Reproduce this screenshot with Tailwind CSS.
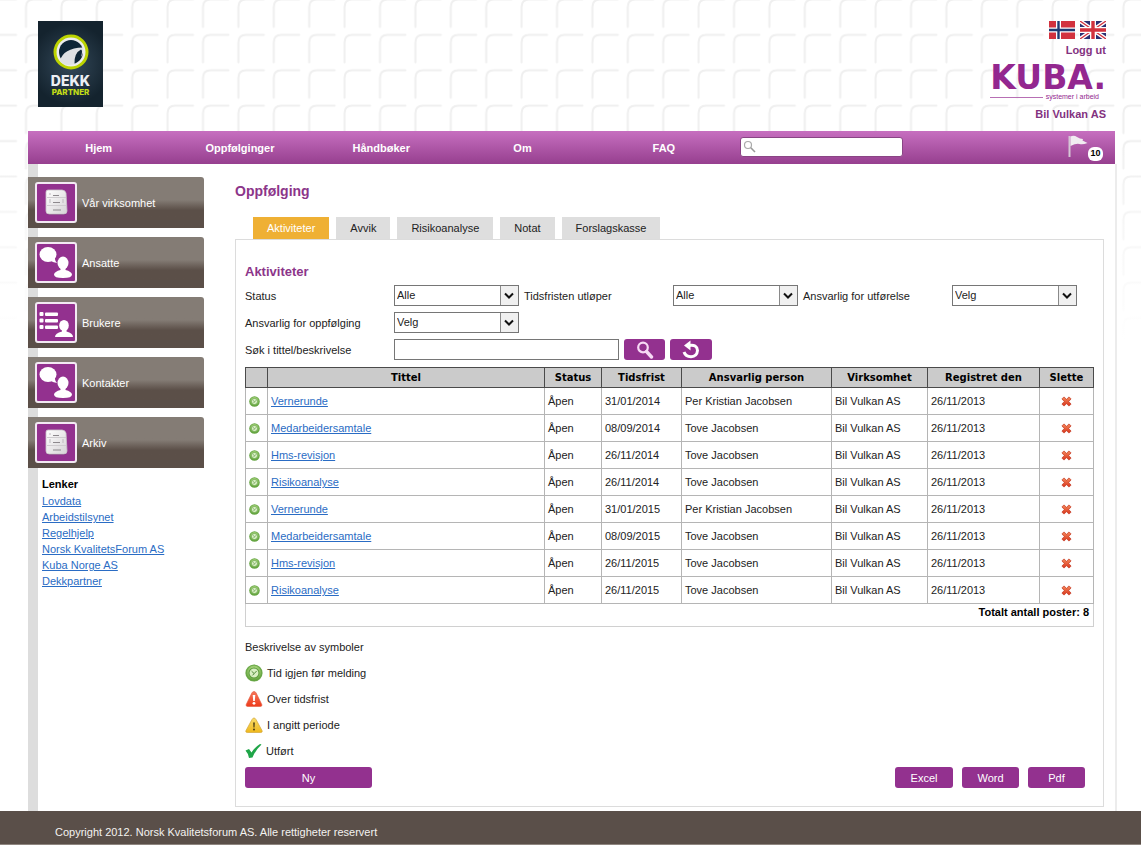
<!DOCTYPE html>
<html lang="no">
<head>
<meta charset="utf-8">
<title>Kuba – Oppfølging</title>
<script src="https://cdn.jsdelivr.net/npm/@tailwindcss/browser@4"></script>
</head>
<body class="relative min-h-screen bg-white font-['Liberation_Sans',Arial,sans-serif] text-[11px] leading-4 text-[#222]">

<!-- Shared icon shapes -->
<svg class="absolute h-0 w-0" aria-hidden="true">
  <defs>
    <radialGradient id="gGreen" cx=".5" cy=".4" r=".6"><stop offset="0" stop-color="#cfeaa8"/><stop offset=".55" stop-color="#9fce74"/><stop offset="1" stop-color="#5a9e36"/></radialGradient>
    <linearGradient id="gRed" x1="0" y1="0" x2="0" y2="1"><stop offset="0" stop-color="#f4775a"/><stop offset="1" stop-color="#ee3b1c"/></linearGradient>
    <linearGradient id="gYellow" x1="0" y1="0" x2="0" y2="1"><stop offset="0" stop-color="#f8dc6a"/><stop offset="1" stop-color="#efb81c"/></linearGradient>
    <linearGradient id="gCross" x1="0" y1="0" x2="0" y2="1"><stop offset="0" stop-color="#f58a5c"/><stop offset="1" stop-color="#d8341c"/></linearGradient>
    <linearGradient id="gCab" x1="0" y1="0" x2="1" y2="1"><stop offset="0" stop-color="#ffffff"/><stop offset="1" stop-color="#d6d3d6"/></linearGradient>
    <symbol id="clock" viewBox="0 0 18 18">
      <circle cx="9" cy="9" r="8.6" fill="#6aa848"/><circle cx="9" cy="9" r="7.4" fill="url(#gGreen)"/>
      <circle cx="9" cy="9" r="5" fill="#d9efc4" stroke="#5d9c3e" stroke-width="1.1"/>
      <path d="M6.6 7.2 9.2 9.6 11.6 7M9.2 9.6 7.4 11.4" fill="none" stroke="#4f8a3a" stroke-width="1"/>
    </symbol>
    <symbol id="cross" viewBox="0 0 12 12">
      <path d="M3.2 1 6 3.6 8.8 1 11 3.2 8.4 6 11 8.8 8.8 11 6 8.4 3.2 11 1 8.8 3.6 6 1 3.2Z" fill="url(#gCross)" stroke="#c23a22" stroke-width=".8" stroke-linejoin="round"/>
    </symbol>
    <symbol id="cabinet" viewBox="0 0 38 37">
      <path d="M10 28h19l-1 3H11Z" fill="#6d1d6b" opacity=".6"/>
      <path d="M11 6h14q3 0 4 3l1 18q0 3-3 3H12q-3 0-3-3V8q0-2 2-2Z" fill="url(#gCab)" stroke="#c9c4c9" stroke-width=".8"/>
      <path d="M10 13.5h19M10 21.500h19" stroke="#cfcccf" stroke-width="1"/>
      <path d="M16 11.500h6M16 18.500h7M16 26h8" stroke="#8d898d" stroke-width="1.200"/>
      <path d="M13 15v4M26 15v4M13 9v2" stroke="#bdb9bd" stroke-width="1"/>
    </symbol>
    <symbol id="talk" viewBox="0 0 38 37">
      <ellipse cx="11" cy="10.500" rx="8.500" ry="7.500" fill="#fff"/><path d="M13 16q3 3 7 3-2-2-2.500-6Z" fill="#fff"/>
      <ellipse cx="26" cy="19" rx="5.500" ry="6.500" fill="#fff"/>
      <path d="M23.500 22h5v4q6 1.500 6.500 4.500 0 3.500-9 3.500t-9-3.500q.5-3 6.500-4.500Z" fill="#fff"/>
    </symbol>
    <symbol id="list" viewBox="0 0 38 37">
      <g fill="#fff"><rect x="2.500" y="8" width="4" height="4" rx="1"/><rect x="8" y="8.500" width="13" height="3.500" rx="1"/>
      <rect x="2.500" y="14.500" width="4" height="4" rx="1"/><rect x="8" y="15" width="13" height="3.500" rx="1"/>
      <rect x="2.500" y="21" width="4" height="4" rx="1"/><rect x="8" y="21.500" width="13" height="3.500" rx="1"/></g>
      <ellipse cx="27" cy="21.500" rx="4.800" ry="5.500" fill="#fff"/>
      <path d="M25 24h4.500v3.500q6.500 1.500 6.500 5.500H18q0-4 7-5.500Z" fill="#fff"/>
    </symbol>
    <symbol id="chev" viewBox="0 0 18 19">
      <rect width="18" height="19" fill="#f0f0f0"/><path d="M.5 0v19" stroke="#8a8a8a"/><path d="M5 7.500 9 11.500 13 7.500" fill="none" stroke="#111" stroke-width="2"/>
    </symbol>
  </defs>
</svg>

<!-- Tiled backdrop, fading out downwards -->
<div class="absolute inset-x-0 top-0 h-[340px] overflow-hidden" aria-hidden="true">
  <svg class="h-full w-full">
    <defs>
      <pattern id="tiles" width="35.4" height="35.4" patternUnits="userSpaceOnUse" x="24.500" y="-2">
        <path d="M1.500 29V9Q1.500 1.500 9 1.500H27" fill="none" stroke="#efefef" stroke-width="2" stroke-linecap="round"/>
      </pattern>
      <linearGradient id="fade" x1="0" y1="0" x2="0" y2="1"><stop offset=".4" stop-color="#fff" stop-opacity="0"/><stop offset="1" stop-color="#fff"/></linearGradient>
    </defs>
    <rect width="100%" height="100%" fill="url(#tiles)"/><rect width="100%" height="100%" fill="url(#fade)"/>
  </svg>
</div>

<div class="relative">
  <header class="ml-7 mr-[26px]">
    <div class="flex h-[131px] items-start justify-between pl-[10px] pr-[9px] pt-[21px]">
      <a href="#" class="flex h-[86px] w-[65px] flex-col items-center bg-[radial-gradient(circle_at_center,#34495a,#14232e_75%)] pt-[12px] font-['Inter',sans-serif]">
        <svg class="h-[38px] w-[38px] shrink-0" viewBox="0 0 38 38" aria-hidden="true">
          <circle cx="19" cy="19" r="16" fill="#ececec" stroke="#bcd300" stroke-width="3"/>
          <circle cx="19" cy="19" r="12" fill="#0f2636"/>
          <path d="M8 28Q11 15 31 14.500 32 20 29 24 31 17 29 16.500 22 20 22.500 31 13 34 8 28Z" fill="#dfe1e3"/>
        </svg>
        <span class="pt-[3px] text-[14px] font-extrabold leading-[14px] text-[#eceff4]">DEKK</span>
        <span class="text-[8px] font-extrabold leading-[8px] text-[#c3dc16]">PARTNER</span>
      </a>
      <div class="flex flex-col items-end font-bold text-[#83327f]">
        <div class="flex gap-[5px]">
          <a href="#" aria-label="Norsk"><svg class="h-[18px] w-[26px]" viewBox="0 0 26 18"><path fill="#d2323e" d="M0 0h26v18H0z"/><path d="M9.500 0v18M0 9h26" stroke="#fff" stroke-width="5"/><path d="M9.500 0v18M0 9h26" stroke="#1f3b73" stroke-width="2.400"/></svg></a>
          <a href="#" aria-label="English"><svg class="h-[18px] w-[26px]" viewBox="0 0 26 18"><path fill="#2b2f72" d="M0 0h26v18H0z"/><path d="M0 0 26 18M26 0 0 18" stroke="#fff" stroke-width="4"/><path d="M0 0 26 18M26 0 0 18" stroke="#d2323e" stroke-width="1.300"/><path d="M13 0v18M0 9h26" stroke="#fff" stroke-width="6"/><path d="M13 0v18M0 9h26" stroke="#d2323e" stroke-width="3.400"/></svg></a>
        </div>
        <a href="#" class="mt-[3px]">Logg ut</a>
        <div class="mt-[6px] flex flex-col items-end text-[#93278f]">
          <span class="font-['DejaVu_Sans',sans-serif] text-[33px] font-bold leading-[28px]">KUBA.</span>
          <div class="flex w-full items-center gap-[3px] pr-[7px]"><span class="h-px grow bg-[#b76fb4]"></span><span class="text-[7px] font-normal leading-[10px]">systemer i arbeid</span></div>
        </div>
        <span class="mt-[4px]">Bil Vulkan AS</span>
      </div>
    </div>
    <nav class="flex h-[33px] items-center bg-linear-to-b from-[#c76fc0] to-[#963f8f] font-bold text-white">
      <a href="#" class="w-[13%] text-center">Hjem</a>
      <a href="#" class="w-[13%] text-center">Oppfølginger</a>
      <a href="#" class="w-[13%] text-center">Håndbøker</a>
      <a href="#" class="w-[13%] text-center">Om</a>
      <a href="#" class="w-[13%] text-center">FAQ</a>
      <label class="mb-px ml-[6px] flex h-[20px] w-[163px] items-center rounded-[3px] border border-[#8a4585] bg-white pl-[2px]">
        <svg class="h-[14px] w-[14px]" viewBox="0 0 14 14" fill="none" aria-hidden="true"><circle cx="5" cy="5" r="3.500" stroke="#aaa" stroke-width="1.200"/><path d="M7.800 7.800 12 12" stroke="#999" stroke-width="1.600"/></svg>
        <input type="search" aria-label="Søk" class="min-w-0 grow font-normal text-[#222] outline-none">
      </label>
      <a href="#" class="ml-auto mr-[12px] flex items-end text-black">
        <svg class="mb-[4px] h-[22px] w-[20px]" viewBox="0 0 20 22" aria-hidden="true"><path d="M1.500 1v21" stroke="#d5c6d5" stroke-width="2"/><path d="M2.500 1.500Q6 0 9 2t6 2l-.5 1.500 5 2.500q-5 2-8 1T2.500 11Z" fill="#f1ecf1"/></svg>
        <span class="flex h-[14px] w-[15px] items-center justify-center rounded-[6px] bg-white text-[9px] leading-none">10</span>
      </a>
    </nav>
  </header>

  <div class="ml-7 mr-[24px] flex border-r-2 border-[#ececec] bg-white">
    <aside class="w-[207px] shrink-0 bg-[linear-gradient(to_right,#dddddd_10px,transparent_10px)] pt-[13px]">
      <ul class="flex w-[176px] flex-col gap-[9px] text-white">
        <li><a href="#" class="flex h-[51px] items-center gap-[5px] rounded-tr-[3px] bg-linear-to-b from-[#847c75] from-45% to-[#5b4f48] to-65% pl-[7px]"><svg class="h-[41px] w-[42px] rounded-[3px] border-2 border-[#f3e9f3] bg-[#93318f]"><use href="#cabinet"/></svg>Vår virksomhet</a></li>
        <li><a href="#" class="flex h-[51px] items-center gap-[5px] rounded-tr-[3px] bg-linear-to-b from-[#847c75] from-45% to-[#5b4f48] to-65% pl-[7px]"><svg class="h-[41px] w-[42px] rounded-[3px] border-2 border-[#f3e9f3] bg-[#93318f]"><use href="#talk"/></svg>Ansatte</a></li>
        <li><a href="#" class="flex h-[51px] items-center gap-[5px] rounded-tr-[3px] bg-linear-to-b from-[#847c75] from-45% to-[#5b4f48] to-65% pl-[7px]"><svg class="h-[41px] w-[42px] rounded-[3px] border-2 border-[#f3e9f3] bg-[#93318f]"><use href="#list"/></svg>Brukere</a></li>
        <li><a href="#" class="flex h-[51px] items-center gap-[5px] rounded-tr-[3px] bg-linear-to-b from-[#847c75] from-45% to-[#5b4f48] to-65% pl-[7px]"><svg class="h-[41px] w-[42px] rounded-[3px] border-2 border-[#f3e9f3] bg-[#93318f]"><use href="#talk"/></svg>Kontakter</a></li>
        <li><a href="#" class="flex h-[51px] items-center gap-[5px] rounded-tr-[3px] bg-linear-to-b from-[#847c75] from-45% to-[#5b4f48] to-65% pl-[7px]"><svg class="h-[41px] w-[42px] rounded-[3px] border-2 border-[#f3e9f3] bg-[#93318f]"><use href="#cabinet"/></svg>Arkiv</a></li>
      </ul>
      <div class="pl-[14px] pt-[8px] text-[#2a6cc4]">
        <h2 class="mb-px font-bold text-black">Lenker</h2>
        <ul class="underline">
          <li><a href="#">Lovdata</a></li>
          <li><a href="#">Arbeidstilsynet</a></li>
          <li><a href="#">Regelhjelp</a></li>
          <li><a href="#">Norsk KvalitetsForum AS</a></li>
          <li><a href="#">Kuba Norge AS</a></li>
          <li><a href="#">Dekkpartner</a></li>
        </ul>
      </div>
    </aside>

    <main class="min-w-0 grow pb-[4px] pr-[11px] pt-[17px]">
      <h1 class="text-[14px] font-bold leading-5 text-[#8c358a]">Oppfølging</h1>
      <div class="mt-[16px] flex gap-[7px] pl-[18px]">
        <button class="h-[22px] bg-[#efb034] px-[14px] text-white">Aktiviteter</button>
        <button class="h-[22px] bg-[#dedede] px-[14px]">Avvik</button>
        <button class="h-[22px] bg-[#dedede] px-[14px]">Risikoanalyse</button>
        <button class="h-[22px] bg-[#dedede] px-[14px]">Notat</button>
        <button class="h-[22px] bg-[#dedede] px-[14px]">Forslagskasse</button>
      </div>
      <section class="border border-[#dcdcdc] px-[9px] pb-[18px] pt-[24px]">
        <h2 class="text-[13px] font-bold leading-4 text-[#8c358a]">Aktiviteter</h2>
        <form class="mt-[5px] grid grid-cols-[149px_125px_154px_125px_154px_125px] items-center gap-y-[6px]">
          <label for="status">Status</label>
          <div class="relative h-[21px] border border-[#767676]"><select id="status" class="h-full w-full appearance-none pl-[2px] leading-none outline-none"><option>Alle</option></select><svg class="pointer-events-none absolute right-0 top-0 h-[19px] w-[18px]"><use href="#chev"/></svg></div>
          <label for="frist" class="pl-[5px]">Tidsfristen utløper</label>
          <div class="relative h-[21px] border border-[#767676]"><select id="frist" class="h-full w-full appearance-none pl-[2px] leading-none outline-none"><option>Alle</option></select><svg class="pointer-events-none absolute right-0 top-0 h-[19px] w-[18px]"><use href="#chev"/></svg></div>
          <label for="utf" class="pl-[5px]">Ansvarlig for utførelse</label>
          <div class="relative h-[21px] border border-[#767676]"><select id="utf" class="h-full w-full appearance-none pl-[2px] leading-none outline-none"><option>Velg</option></select><svg class="pointer-events-none absolute right-0 top-0 h-[19px] w-[18px]"><use href="#chev"/></svg></div>
          <label for="opp">Ansvarlig for oppfølging</label>
          <div class="relative h-[21px] border border-[#767676]"><select id="opp" class="h-full w-full appearance-none pl-[2px] leading-none outline-none"><option>Velg</option></select><svg class="pointer-events-none absolute right-0 top-0 h-[19px] w-[18px]"><use href="#chev"/></svg></div>
          <label for="sok" class="col-start-1">Søk i tittel/beskrivelse</label>
          <div class="col-span-5 flex gap-[5px]">
            <input id="sok" type="text" class="h-[21px] w-[225px] border border-[#767676] px-1 outline-none">
            <button type="button" aria-label="Søk" class="flex h-[21px] w-[41px] items-center justify-center rounded-[3px] bg-[#93318f]"><svg class="h-[18px] w-[18px]" viewBox="0 0 18 18" fill="none" stroke="#f7d9f5"><circle cx="7" cy="6.500" r="4.800" stroke-width="2.200"/><path d="m10.500 10.500 5 5.500" stroke-width="3.400" stroke-linecap="round"/></svg></button>
            <button type="button" aria-label="Nullstill" class="flex h-[21px] w-[42px] items-center justify-center rounded-[3px] bg-[#93318f]"><svg class="h-[20px] w-[20px]" viewBox="0 0 20 20"><path d="M8 5.500Q16 4 16.500 10.500 16 16.500 10 16.800 4.500 16.500 3 12" fill="none" stroke="#fff" stroke-width="3"/><path d="M3 5.500 9.500 .5V10.500Z" fill="#fff"/></svg></button>
          </div>
        </form>

        <table class="mt-[7px] w-full table-fixed border-collapse [&_td]:border [&_td]:border-[#b5b5b5] [&_td]:px-[3px] [&_th]:border [&_th]:border-[#4a4a4a] [&_th]:bg-[#cbcbcb] [&_th]:p-0 [&_td:last-child>button]:mx-auto">
          <colgroup><col class="w-[22px]"><col><col class="w-[57px]"><col class="w-[80px]"><col class="w-[150px]"><col class="w-[96px]"><col class="w-[112px]"><col class="w-[54px]"></colgroup>
          <thead>
            <tr class="h-[20px] font-['DejaVu_Sans',sans-serif] text-[10px] font-bold text-black"><th aria-label="Symbol"></th><th>Tittel</th><th>Status</th><th>Tidsfrist</th><th>Ansvarlig person</th><th>Virksomhet</th><th>Registret den</th><th>Slette</th></tr>
          </thead>
          <tbody>
            <tr class="h-[27px]"><td><svg class="block h-[11px] w-[11px]"><use href="#clock"/></svg></td><td><a href="#" class="text-[#2a6cc4] underline">Vernerunde</a></td><td>Åpen</td><td>31/01/2014</td><td>Per Kristian Jacobsen</td><td>Bil Vulkan AS</td><td>26/11/2013</td><td><button aria-label="Slett" class="block"><svg class="block h-[11px] w-[11px]"><use href="#cross"/></svg></button></td></tr>
            <tr class="h-[27px]"><td><svg class="block h-[11px] w-[11px]"><use href="#clock"/></svg></td><td><a href="#" class="text-[#2a6cc4] underline">Medarbeidersamtale</a></td><td>Åpen</td><td>08/09/2014</td><td>Tove Jacobsen</td><td>Bil Vulkan AS</td><td>26/11/2013</td><td><button aria-label="Slett" class="block"><svg class="block h-[11px] w-[11px]"><use href="#cross"/></svg></button></td></tr>
            <tr class="h-[27px]"><td><svg class="block h-[11px] w-[11px]"><use href="#clock"/></svg></td><td><a href="#" class="text-[#2a6cc4] underline">Hms-revisjon</a></td><td>Åpen</td><td>26/11/2014</td><td>Tove Jacobsen</td><td>Bil Vulkan AS</td><td>26/11/2013</td><td><button aria-label="Slett" class="block"><svg class="block h-[11px] w-[11px]"><use href="#cross"/></svg></button></td></tr>
            <tr class="h-[27px]"><td><svg class="block h-[11px] w-[11px]"><use href="#clock"/></svg></td><td><a href="#" class="text-[#2a6cc4] underline">Risikoanalyse</a></td><td>Åpen</td><td>26/11/2014</td><td>Tove Jacobsen</td><td>Bil Vulkan AS</td><td>26/11/2013</td><td><button aria-label="Slett" class="block"><svg class="block h-[11px] w-[11px]"><use href="#cross"/></svg></button></td></tr>
            <tr class="h-[27px]"><td><svg class="block h-[11px] w-[11px]"><use href="#clock"/></svg></td><td><a href="#" class="text-[#2a6cc4] underline">Vernerunde</a></td><td>Åpen</td><td>31/01/2015</td><td>Per Kristian Jacobsen</td><td>Bil Vulkan AS</td><td>26/11/2013</td><td><button aria-label="Slett" class="block"><svg class="block h-[11px] w-[11px]"><use href="#cross"/></svg></button></td></tr>
            <tr class="h-[27px]"><td><svg class="block h-[11px] w-[11px]"><use href="#clock"/></svg></td><td><a href="#" class="text-[#2a6cc4] underline">Medarbeidersamtale</a></td><td>Åpen</td><td>08/09/2015</td><td>Tove Jacobsen</td><td>Bil Vulkan AS</td><td>26/11/2013</td><td><button aria-label="Slett" class="block"><svg class="block h-[11px] w-[11px]"><use href="#cross"/></svg></button></td></tr>
            <tr class="h-[27px]"><td><svg class="block h-[11px] w-[11px]"><use href="#clock"/></svg></td><td><a href="#" class="text-[#2a6cc4] underline">Hms-revisjon</a></td><td>Åpen</td><td>26/11/2015</td><td>Tove Jacobsen</td><td>Bil Vulkan AS</td><td>26/11/2013</td><td><button aria-label="Slett" class="block"><svg class="block h-[11px] w-[11px]"><use href="#cross"/></svg></button></td></tr>
            <tr class="h-[27px]"><td><svg class="block h-[11px] w-[11px]"><use href="#clock"/></svg></td><td><a href="#" class="text-[#2a6cc4] underline">Risikoanalyse</a></td><td>Åpen</td><td>26/11/2015</td><td>Tove Jacobsen</td><td>Bil Vulkan AS</td><td>26/11/2013</td><td><button aria-label="Slett" class="block"><svg class="block h-[11px] w-[11px]"><use href="#cross"/></svg></button></td></tr>
          </tbody>
        </table>
        <p class="h-[23px] border border-t-0 border-[#d0d0d0] pr-1 text-right font-bold text-black">Totalt antall poster: 8</p>

        <p class="mt-[12px]">Beskrivelse av symboler</p>
        <ul class="mt-[5px]">
          <li class="flex h-[26px] items-center gap-[4px]"><svg class="h-[18px] w-[18px]"><use href="#clock"/></svg>Tid igjen før melding</li>
          <li class="flex h-[26px] items-center gap-[4px]"><svg class="h-[18px] w-[18px]" viewBox="0 0 18 18" aria-hidden="true"><path d="M9 1.500q1.500 0 2.200 1.500l5.600 11.500q.6 2-1.300 2h-13q-1.900 0-1.300-2L6.800 3Q7.500 1.500 9 1.500Z" fill="url(#gRed)" stroke="#e25a3e" stroke-width=".6"/><path d="M7.700 5h2.600l-.5 6H8.200Z" fill="#fff"/><circle cx="9" cy="13.300" r="1.400" fill="#fff"/></svg>Over tidsfrist</li>
          <li class="flex h-[26px] items-center gap-[4px]"><svg class="h-[18px] w-[18px]" viewBox="0 0 18 18" aria-hidden="true"><path d="M9 2q1.200 0 2 1.500l6 11q.8 2-1.200 2H2.200q-2 0-1.200-2l6-11Q7.800 2 9 2Z" fill="url(#gYellow)" stroke="#d2a63a" stroke-width=".7"/><path d="M8.200 6.500h1.600l-.3 5h-1Z" fill="#3c3010"/><circle cx="9" cy="13.500" r=".9" fill="#3c3010"/></svg>I angitt periode</li>
          <li class="flex h-[26px] items-center gap-[4px]"><svg class="h-[16px] w-[17px]" viewBox="0 0 17 16" aria-hidden="true"><path d="M.5 7.500 4 6 6.500 9.500Q10 4 15 1L16.500 1.500Q10.500 7 7.500 14.500L4 15Q3 10 .5 7.500Z" fill="#1fa548"/></svg>Utført</li>
        </ul>
        <div class="mt-[3px] flex gap-[9px] pr-[9px] text-white">
          <button class="mr-auto h-[21px] w-[127px] rounded-[3px] bg-[#93318f]">Ny</button>
          <button class="h-[21px] w-[58px] rounded-[3px] bg-[#93318f]">Excel</button>
          <button class="h-[21px] w-[57px] rounded-[3px] bg-[#93318f]">Word</button>
          <button class="h-[21px] w-[57px] rounded-[3px] bg-[#93318f]">Pdf</button>
        </div>
      </section>
    </main>
  </div>

  <footer class="flex h-[34px] items-center border-b border-[#8f8680] bg-[#5a4f49] pl-[55px] pt-[8px] text-[#f4f2f0]">Copyright 2012. Norsk Kvalitetsforum AS. Alle rettigheter reservert</footer>
</div>
</body>
</html>
